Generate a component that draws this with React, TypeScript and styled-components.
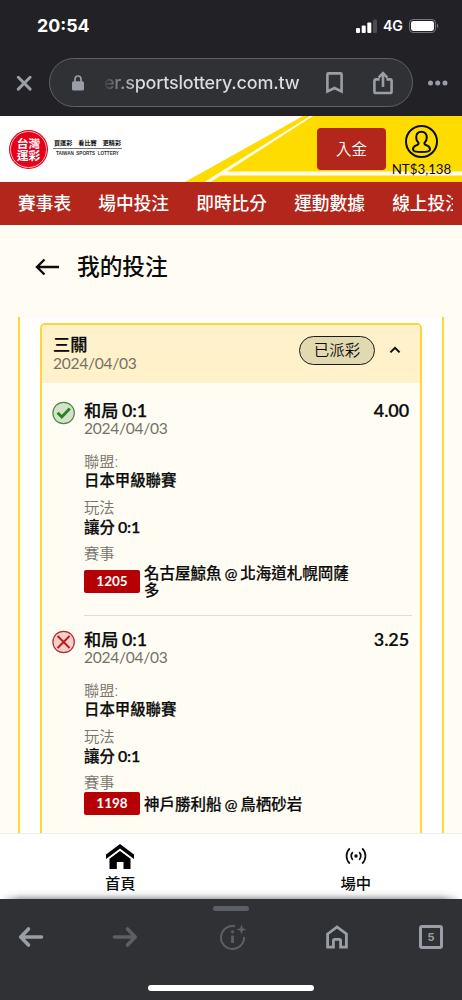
import React from "react";
import styled, { createGlobalStyle } from "styled-components";

const Global = createGlobalStyle`
  * { box-sizing: border-box; }
  body { margin: 0; background: #fffdf3; }
`;

const Screen = styled.div`
  width: 462px;
  height: 1000px;
  overflow: hidden;
  display: flex;
  flex-direction: column;
  background: #fffdf3;
  color: #0c0c0c;
  font-family: Lato, "Noto Sans CJK TC", sans-serif;
  svg { display: block; flex: none; }
`;

/* Browser chrome, top */
const BrowserTop = styled.header`
  height: 116px;
  flex: none;
  background: #212126;
  font-family: Inter, sans-serif;
`;
const StatusBar = styled.div`
  height: 58px;
  padding: 0 23px 7px 37px;
  display: flex;
  align-items: center;
  justify-content: space-between;
  color: #fff;
`;
const Clock = styled.span`
  font-size: 17.8px;
  font-weight: 700;
`;
const StatusIcons = styled.div`
  display: flex;
  align-items: center;
  gap: 6px;
  font-size: 14.2px;
  font-weight: 600;
`;
const AddressRow = styled.div`
  display: flex;
  align-items: center;
  padding-left: 16px;
`;
const AddressBar = styled.div`
  width: 364px;
  height: 49px;
  margin-left: 17px;
  margin-right: 15px;
  padding-left: 22px;
  border: 1px solid #606166;
  border-radius: 25px;
  background: #303135;
  display: flex;
  align-items: center;
`;
const Url = styled.span`
  width: 200px;
  margin: 0 22px 0 20px;
  font-size: 18px;
  font-weight: 500;
  letter-spacing: -0.22px;
  white-space: nowrap;
  color: transparent;
  background: linear-gradient(90deg, #3a3b3f 0, #85868a 14px, #dcdde0 36px);
  background-clip: text;
`;
const ShareWrap = styled.span`
  margin-left: 30px;
`;

/* Site header */
const SiteHeader = styled.div`
  position: relative;
  height: 66px;
  flex: none;
  display: flex;
  background: #fff;
  padding-left: 9px;
`;
const Backdrop = styled.svg`
  position: absolute;
  inset: 0;
`;
const Logo = styled.div`
  position: relative;
  display: flex;
  align-items: center;
  gap: 5px;
  width: 308px;
`;
const Seal = styled.div`
  width: 39px;
  height: 39px;
  padding: 1px;
  border-radius: 50%;
  background: #e60019;
`;
const SealRing = styled.div`
  width: 37px;
  height: 37px;
  border: 1px solid #f6b9bd;
  border-radius: 50%;
  color: #fff;
  font-family: "Noto Sans CJK TC", sans-serif;
  font-weight: 700;
  font-size: 11.8px;
  line-height: 11.5px;
  text-align: center;
  padding-top: 5.5px;
`;
const Slogan = styled.div`
  width: 69px;
  text-align: center;
  white-space: nowrap;
  padding-bottom: 2px;
`;
const SloganZh = styled.div`
  display: flex;
  justify-content: space-between;
  padding: 0 1px;
  font-size: 6.1px;
  font-weight: 700;
  line-height: 10px;
  border-bottom: 1px solid #777;
`;
const SloganEn = styled.div`
  font-family: "Liberation Sans", sans-serif;
  font-size: 4.6px;
  font-weight: 700;
  line-height: 9px;
  color: #333;
  word-spacing: 1.2px;
`;
const Deposit = styled.button`
  position: relative;
  width: 69px;
  height: 42px;
  margin: 12px 0 0;
  padding: 0 0 2px;
  border: 0;
  border-radius: 4px;
  background: #b3261b;
  color: #fff;
  font: 350 15.5px/40px "Noto Sans CJK TC", sans-serif;
`;
const Account = styled.div`
  position: relative;
  flex: 1;
  display: flex;
  flex-direction: column;
  align-items: center;
  padding: 9px 5px 0 0;
`;
const Balance = styled.span`
  font-size: 13.3px;
  line-height: 14px;
  margin-top: 4px;
`;
const Nav = styled.nav`
  height: 43px;
  flex: none;
  padding: 1px 0 0 18px;
  background: #b3261b;
  color: #fff;
  font-size: 17.7px;
  font-weight: 500;
  line-height: 42px;
`;
const NavTrack = styled.div`
  width: 435px;
  display: flex;
  gap: 27.2px;
  overflow: hidden;
  white-space: nowrap;
  span { flex: none; }
`;

/* My bets */
const Title = styled.h1`
  margin: 0;
  height: 92px;
  flex: none;
  padding: 0 0 8px 35px;
  display: flex;
  align-items: center;
  gap: 17px;
  font-size: 22.7px;
  font-weight: 500;
  span { padding-bottom: 3px; }
`;
const Panel = styled.main`
  flex: 1;
  min-height: 0;
  overflow: hidden;
  margin: 0 18px;
  padding: 6px 20px 0;
  border: solid #ffd634;
  border-width: 0 2px;
  background: #fff;
`;
const Card = styled.section`
  height: 560px;
  border: 2.5px solid #ffd634;
  border-radius: 5px;
  background: #fffdf3;
  overflow: hidden;
`;
const CardHead = styled.div`
  height: 58px;
  padding: 0 19px 0 11px;
  display: flex;
  background: #fff1c9;
`;
const HeadText = styled.div`
  flex: 1;
  padding-top: 10px;
`;
const Strong = styled.div<{ $size: number; $lh: number }>`
  font-size: ${(p) => p.$size}px;
  line-height: ${(p) => p.$lh}px;
  height: ${(p) => p.$lh}px;
  font-weight: 500;
  white-space: nowrap;
  -webkit-text-stroke: 0.25px currentColor;
  word-spacing: -0.8px;
  b { font-weight: 600; font-size: 1.04em; letter-spacing: -0.1px; }
`;
const DateText = styled.div`
  margin-top: -1px;
  font-size: 15.6px;
  line-height: 18px;
  color: #757268;
  letter-spacing: -0.3px;
`;
const Status = styled.span`
  width: 76px;
  height: 29px;
  margin: 11px 14px 0 0;
  border: 1px solid #1b1b1b;
  border-radius: 15px;
  background: #e3d9b1;
  font-size: 15.5px;
  font-weight: 350;
  line-height: 27px;
  text-align: center;
`;
const Chevron = styled.svg`
  margin-top: 20px;
`;
const Bet = styled.article<{ $top: number }>`
  display: flex;
  padding: ${(p) => p.$top}px 0 0 10px;
`;
const Mark = styled.div`
  width: 32px;
  flex: none;
  padding-top: 1px;
`;
const BetBody = styled.div<{ $rule?: boolean }>`
  flex: 1;
  height: ${(p) => (p.$rule ? 216 : 240)}px;
  margin-right: 8px;
  border-bottom: ${(p) => (p.$rule ? "1px solid #dfddd5" : "0")};
`;
const BetTop = styled.div`
  display: flex;
  justify-content: space-between;
  padding-right: 3px;
`;
const Odds = styled.span`
  font-size: 18px;
  font-weight: 600;
  line-height: 20px;
  letter-spacing: -0.1px;
  -webkit-text-stroke: 0.2px currentColor;
`;
const Details = styled.div`
  margin: 15px 0 0;
  display: grid;
  row-gap: 8px;
`;
const Label = styled.div`
  font-size: 15.3px;
  line-height: 19px;
  height: 19px;
  font-weight: 350;
  color: #77746d;
`;
const Match = styled.div`
  display: flex;
  align-items: center;
  gap: 4px;
`;
const Code = styled.span`
  width: 56px;
  height: 23px;
  flex: none;
  border-radius: 2px;
  background: #b50005;
  color: #fff;
  font-size: 13.5px;
  font-weight: 700;
  line-height: 23px;
  text-align: center;
`;
const Teams = styled.span`
  width: 212px;
  padding-top: 2px;
  font-size: 15.5px;
  font-weight: 500;
  line-height: 17px;
  word-spacing: -1px;
  -webkit-text-stroke: 0.2px currentColor;
`;

/* Bottom bars */
const TabBar = styled.footer`
  position: relative;
  height: 66px;
  flex: none;
  display: flex;
  background: #fff;
  border-top: 1px solid #eeeeea;
`;
const TabShade = styled.div`
  position: absolute;
  left: 0;
  right: 0;
  bottom: 0;
  height: 10px;
  background: linear-gradient(#fff0, #0000000d 50%, #00000050);
  mask-image: linear-gradient(90deg, transparent, #000 20px, #000 442px, transparent);
`;
const Tab = styled.div<{ $left: number }>`
  position: relative;
  width: 231px;
  padding-left: ${(p) => p.$left}px;
  display: flex;
  flex-direction: column;
  align-items: center;
  font-size: 15.3px;
  font-weight: 500;
  line-height: 20px;
`;
const TabIcon = styled.div`
  height: 39px;
  display: flex;
  align-items: center;
  padding-top: 5px;
`;
const BrowserBottom = styled.footer`
  height: 101px;
  flex: none;
  background: #303135;
  display: flex;
  flex-direction: column;
  align-items: center;
`;
const Grabber = styled.div`
  width: 36px;
  height: 5px;
  margin-top: 7px;
  border-radius: 3px;
  background: #5c5f64;
`;
const Tools = styled.div`
  width: 100%;
  height: 52px;
  padding-left: 18px;
  display: grid;
  grid-template-columns: 94px 107px 107px 93px 24px;
  align-items: center;
`;
const TabCount = styled.div`
  width: 24px;
  height: 24px;
  border: 3px solid #9a9ea6;
  border-radius: 3px;
  color: #9a9ea6;
  font: 700 11px/18px Inter, sans-serif;
  text-align: center;
`;
const HomeIndicator = styled.div`
  width: 166px;
  height: 6px;
  margin-top: 22px;
  border-radius: 3px;
  background: #fff;
`;

const grey = "#9a9ea6";

const WinMark = () => (
  <svg width="24" height="24" viewBox="0 0 24 24" fill="none">
    <circle cx="11.6" cy="12" r="10.7" fill="#d3e2c8" stroke="#4b8a43" strokeWidth="1.2" />
    <path d="M5.6 11.800l4.200 4.200 8-8.400" stroke="#28841f" strokeWidth="2.900" />
  </svg>
);
const LoseMark = () => (
  <svg width="24" height="24" viewBox="0 0 24 24" fill="none">
    <circle cx="11.600" cy="12" r="10.700" fill="#f5cfca" stroke="#b9262c" strokeWidth="1.200" />
    <path d="M5.600 6l12 12M17.600 6l-12 12" stroke="#b9161c" strokeWidth="1.800" />
  </svg>
);

type BetInfo = { won: boolean; odds: string; code: string; teams: string };
const bets: BetInfo[] = [
  { won: true, odds: "4.00", code: "1205", teams: "名古屋鯨魚 @ 北海道札幌岡薩多" },
  { won: false, odds: "3.25", code: "1198", teams: "神戶勝利船 @ 鳥栖砂岩" },
];

function BetRow({ bet, first }: { bet: BetInfo; first: boolean }) {
  return (
    <Bet $top={first ? 17 : 13}>
      <Mark>{bet.won ? <WinMark /> : <LoseMark />}</Mark>
      <BetBody $rule={first}>
        <BetTop>
          <Strong $size={17.2} $lh={20}>和局 <b>0:1</b></Strong>
          <Odds>{bet.odds}</Odds>
        </BetTop>
        <DateText>2024/04/03</DateText>
        <Details>
          <div>
            <Label>聯盟:</Label>
            <Strong $size={15.4} $lh={19}>日本甲級聯賽</Strong>
          </div>
          <div>
            <Label>玩法</Label>
            <Strong $size={15.4} $lh={19}>讓分 <b>0:1</b></Strong>
          </div>
          <div>
            <Label>賽事</Label>
            <Match>
              <Code>{bet.code}</Code>
              <Teams>{bet.teams}</Teams>
            </Match>
          </div>
        </Details>
      </BetBody>
    </Bet>
  );
}

export default function App() {
  return (
    <Screen>
      <Global />
      <BrowserTop>
        <StatusBar>
          <Clock>20:54</Clock>
          <StatusIcons>
            <svg width="21" height="14" viewBox="0 0 21 14" fill="#fff">
              <rect x="0" y="9" width="4" height="5" rx="1" />
              <rect x="5.7" y="6.5" width="4" height="7.5" rx="1" />
              <rect x="11.3" y="3.5" width="4" height="10.5" rx="1" />
              <rect x="17" y="0.5" width="4" height="13.5" rx="1" fill="#4b4b50" />
            </svg>
            <span>4G</span>
            <svg width="30" height="14" viewBox="0 0 30 14">
              <rect x="0.5" y="0.5" width="26" height="13" rx="3.6" fill="none" stroke="#77777b" />
              <rect x="2" y="2" width="23" height="10" rx="2.4" fill="#fff" />
              <path d="M28 4.8c1.6.6 1.6 3.8 0 4.4z" fill="#77777b" />
            </svg>
          </StatusIcons>
        </StatusBar>
        <AddressRow>
          <svg width="16" height="16" viewBox="0 0 16 16" stroke={grey} strokeWidth="3" strokeLinecap="round">
            <path d="M2.3 2.3l11.8 11.8M14.1 2.3L2.3 14.1" />
          </svg>
          <AddressBar>
            <svg width="12" height="16" viewBox="0 0 12 16">
              <path d="M3 7V4a3 3 0 0 1 6 0v3" fill="none" stroke={grey} strokeWidth="1.7" />
              <rect x="0" y="6.2" width="12" height="9.3" rx="1.6" fill={grey} />
            </svg>
            <Url>er.sportslottery.com.tw</Url>
            <svg width="17" height="22" viewBox="0 0 17 22" fill="none" stroke={grey} strokeWidth="2.6">
              <path d="M1.4 2.4a1 1 0 0 1 1-1h12.2a1 1 0 0 1 1 1v17L8.5 16 1.4 19.4z" />
            </svg>
            <ShareWrap>
              <svg width="20" height="24" viewBox="0 0 20 24" fill="none" stroke={grey} strokeWidth="2.6">
                <path d="M6.600 8.400H3A1.600 1.600 0 0 0 1.400 10v10.400A1.600 1.600 0 0 0 3 22h14a1.600 1.600 0 0 0 1.600-1.600V10A1.600 1.600 0 0 0 17 8.400h-3.600" />
                <path d="M10 16V2.500M5.600 6.600L10 2.200l4.400 4.400" />
              </svg>
            </ShareWrap>
          </AddressBar>
          <svg width="20" height="6" viewBox="0 0 20 6" fill={grey}>
            <circle cx="2.500" cy="3" r="2.500" />
            <circle cx="9.700" cy="3" r="2.500" />
            <circle cx="17" cy="3" r="2.500" />
          </svg>
        </AddressRow>
      </BrowserTop>

      <SiteHeader>
        <Backdrop width="462" height="66" viewBox="0 0 462 66">
          <path d="M303 0H462V66H185z" fill="#ffdc00" />
          <path d="M310 0h3L210.600 66H204.500z" fill="#fffdf0" />
          <path d="M225 55.500H462V59.500H218.500z" fill="#fffdf0" />
        </Backdrop>
        <Logo>
          <Seal><SealRing>台灣<br />運彩</SealRing></Seal>
          <Slogan>
            <SloganZh><span>買運彩</span><span>看比賽</span><span>更精彩</span></SloganZh>
            <SloganEn>TAIWAN SPORTS LOTTERY</SloganEn>
          </Slogan>
        </Logo>
        <Deposit>入金</Deposit>
        <Account>
          <svg width="33" height="33" viewBox="0 0 33 33" fill="none" stroke="#0c0c0c">
            <circle cx="16.500" cy="16.500" r="15.500" strokeWidth="2" />
            <path d="M16.500 6.800c-3.400 0-5.300 2.400-5.300 5.600 0 2.300.9 4.100 2.300 5.300.5 1.700-.6 2.100-2.300 2.700-2.100.8-3.200 2-3.200 4 0 1.600 3.800 2.500 8.500 2.500s8.500-.9 8.500-2.500c0-2-1.100-3.200-3.200-4-1.700-.6-2.800-1-2.300-2.700 1.400-1.200 2.300-3 2.300-5.300 0-3.200-1.900-5.600-5.300-5.600z" strokeWidth="2" />
          </svg>
          <Balance>NT$3,138</Balance>
        </Account>
      </SiteHeader>
      <Nav>
        <NavTrack>
          <span>賽事表</span><span>場中投注</span><span>即時比分</span><span>運動數據</span><span>線上投注</span>
        </NavTrack>
      </Nav>

      <Title>
        <svg width="25" height="18" viewBox="0 0 25 18" fill="none" stroke="#0c0c0c" strokeWidth="2.400">
          <path d="M24 9H2.500M9.500 1.500L2 9l7.500 7.500" />
        </svg>
        <span>我的投注</span>
      </Title>

      <Panel>
        <Card>
          <CardHead>
            <HeadText>
              <Strong $size={17.2} $lh={20}>三關</Strong>
              <DateText>2024/04/03</DateText>
            </HeadText>
            <Status>已派彩</Status>
            <Chevron width="12" height="10" viewBox="0 0 12 10" fill="none" stroke="#0c0c0c" strokeWidth="2">
              <path d="M1.400 7.400L6 2.800l4.600 4.600" />
            </Chevron>
          </CardHead>
          {bets.map((b, i) => <BetRow key={b.code} bet={b} first={i === 0} />)}
        </Card>
      </Panel>

      <TabBar>
        <TabShade />
        <Tab $left={9.5}>
          <TabIcon>
            <svg width="28" height="25" viewBox="0 0 28 25" fill="#000">
              <path d="M14 0L28 10.500V15L14 4.600 0 15v-4.500z" />
              <path d="M14 7L24.500 14.800V25H17.500V18H10.800V25H3.500V14.800z" />
            </svg>
          </TabIcon>
          首頁
        </Tab>
        <Tab $left={18.5}>
          <TabIcon>
            <svg width="22" height="18" viewBox="0 0 22 18" fill="none" stroke="#0c0c0c" strokeWidth="1.700">
              <circle cx="11" cy="9" r="1.700" fill="#0c0c0c" stroke="none" />
              <path d="M7.800 5.200a5.400 5.400 0 0 0 0 7.600M14.200 5.200a5.400 5.400 0 0 1 0 7.600M4.800 1.400a10.500 10.500 0 0 0 0 15.200M17.200 1.400a10.500 10.500 0 0 1 0 15.200" />
            </svg>
          </TabIcon>
          場中
        </Tab>
      </TabBar>

      <BrowserBottom>
        <Grabber />
        <Tools>
          <svg width="26" height="22" viewBox="0 0 26 22" fill="none" stroke={grey} strokeWidth="3.600" strokeLinecap="round" strokeLinejoin="round">
            <path d="M23.500 11H3M10.500 3L2.700 11l7.800 8" />
          </svg>
          <svg width="26" height="22" viewBox="0 0 26 22" fill="none" stroke="#5c5f64" strokeWidth="3.600" strokeLinecap="round" strokeLinejoin="round">
            <path d="M2.500 11H23M15.500 3l7.800 8-7.800 8" />
          </svg>
          <svg width="28" height="28" viewBox="0 0 28 28" fill="none" stroke="#5c5f64" strokeWidth="2">
            <path d="M16 3.300A11.500 11.500 0 1 0 25 14" />
            <path d="M13.500 12.500V20" strokeWidth="2.800" />
            <circle cx="13.500" cy="8.800" r="1.600" fill="#5c5f64" stroke="none" />
            <path d="M22.500 1.500l1.300 3.700 3.700 1.300-3.700 1.300-1.300 3.700-1.300-3.700-3.700-1.300 3.700-1.300z" fill="#5c5f64" stroke="none" />
          </svg>
          <svg width="22" height="24" viewBox="0 0 22 24" fill="none" stroke={grey} strokeWidth="2.800">
            <path d="M1.600 9L11 2l9.400 7v13.200h-5.800v-6.600a1.200 1.200 0 0 0-1.200-1.200H8.600a1.200 1.200 0 0 0-1.200 1.200v6.600H1.600z" />
          </svg>
          <TabCount>5</TabCount>
        </Tools>
        <HomeIndicator />
      </BrowserBottom>
    </Screen>
  );
}
